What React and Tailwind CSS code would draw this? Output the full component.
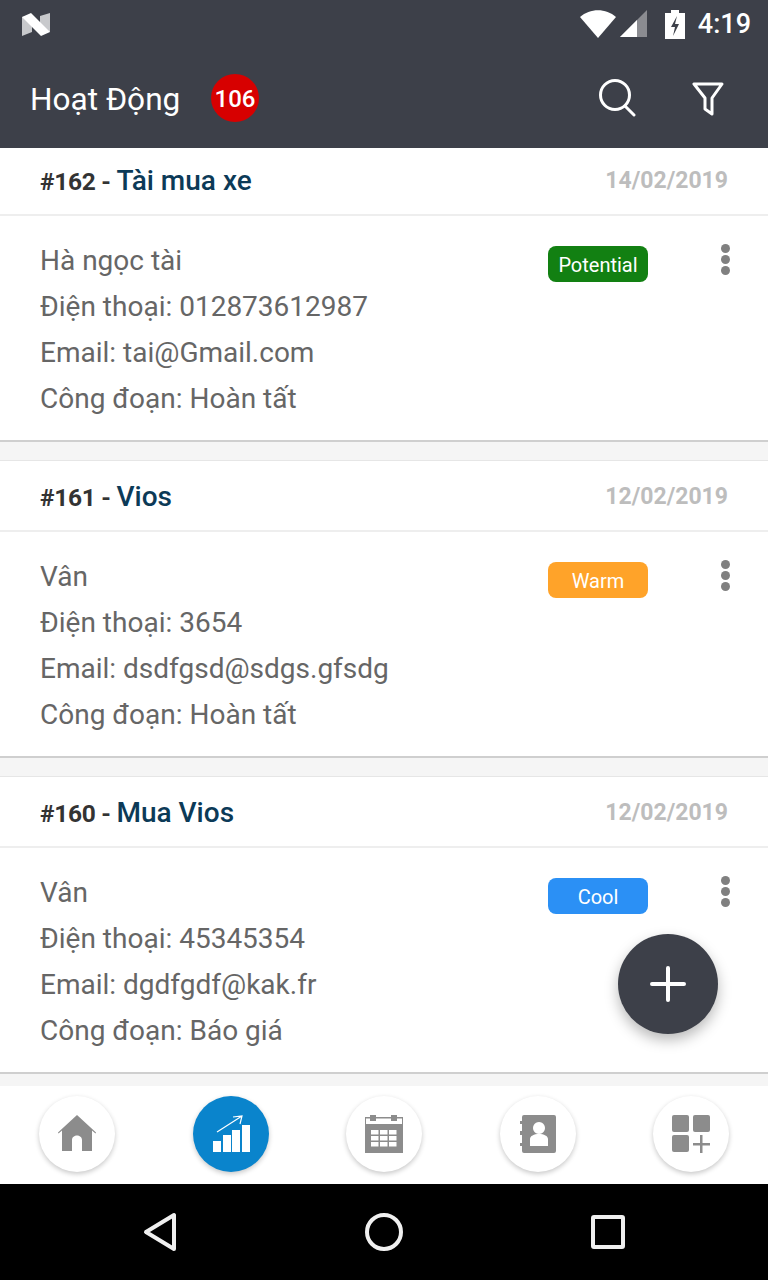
import React from 'react';

const activities = [
    { id: 162, title: 'Tài mua xe', date: '14/02/2019', name: 'Hà ngọc tài', phone: '012873612987', email: 'tai@Gmail.com', stage: 'Hoàn tất', tag: 'Potential', tagClass: 'bg-[#128012]' },
    { id: 161, title: 'Vios', date: '12/02/2019', name: 'Vân', phone: '3654', email: 'dsdfgsd@sdgs.gfsdg', stage: 'Hoàn tất', tag: 'Warm', tagClass: 'bg-[#ffa329]' },
    { id: 160, title: 'Mua Vios', date: '12/02/2019', name: 'Vân', phone: '45345354', email: 'dgdfgdf@kak.fr', stage: 'Báo giá', tag: 'Cool', tagClass: 'bg-[#2b90f5]' },
];

const StatusBar = () => (
    <div className="flex h-12 items-center pl-[21px] pr-[17px] text-white">
        <svg width="30" height="26" viewBox="0 0 30 26">
            <path d="M1 6l10-1v16L1 25z" fill="#c8c9cc" />
            <path d="M19 5l10-3v19l-10-3z" fill="#c8c9cc" />
            <path d="M1 6l9-4 19 19-9 4z" fill="#fff" />
        </svg>
        <svg className="ml-auto" width="36" height="28" viewBox="0 0 36 28">
            <path d="M0 7C10-2 26-2 36 7L18 28z" fill="#fff" />
        </svg>
        <svg className="ml-[3px]" width="30" height="30" viewBox="0 0 30 30">
            <path d="M1 28L28 1v27z" fill="#8b8c91" />
            <path d="M1 28l17-17v17z" fill="#fff" />
        </svg>
        <svg className="ml-[16px]" width="20" height="30" viewBox="0 0 20 30">
            <path d="M6 1h8v3h6v26H0V4h6z" fill="#fff" />
            <path d="M12 7l-6 11h4l-2 9 6-12h-4z" fill="#3d4049" />
        </svg>
        <span className="ml-[13px] text-[27px] font-medium leading-none">4:19</span>
    </div>
);

const AppBar = () => (
    <div className="flex h-[100px] items-center pl-[30px] pr-[44px] text-white">
        <span className="w-[181px] pt-[3px] text-[31.6px] leading-none">Hoạt Động</span>
        <span className="flex size-12 items-center justify-center rounded-full bg-[#d70000] pt-px text-[24px] font-medium">106</span>
        <svg className="ml-auto" width="37" height="38" viewBox="0 0 37 38" fill="none" stroke="#fff" strokeWidth="3" strokeLinecap="round">
            <circle cx="16" cy="16" r="14.500" />
            <path d="M26 27l9 9" />
        </svg>
        <svg className="ml-[56px]" width="32" height="36" viewBox="0 0 32 36" fill="none" stroke="#fff" strokeWidth="3" strokeLinejoin="round">
            <path d="M2 4h28L20 18v16l-7-5V18z" />
        </svg>
    </div>
);

const ActivityCard = ({ item, first }) => (
    <div className={`bg-white border-t border-[#e6e6e6] ${first ? '-mt-1' : ''}`}>
        <div className="flex h-[71px] items-center justify-between border-b-2 border-[#eeeeee] pl-10 pr-10 pt-[2px]">
            <div className="flex items-baseline whitespace-pre leading-none text-[#333333]">
                <span className="text-[24.5px] font-bold tracking-[-0.3px]">#{item.id} - </span>
                <span className="text-[28px] font-medium text-[#0c3a57]">{item.title}</span>
            </div>
            <span className="text-[23px] font-bold leading-none text-[#bdbdbd]">{item.date}</span>
        </div>
        <div className="flex h-[226px] items-start border-b-2 border-[#cfcfcf] pl-10 pt-[22px]">
            <div className="flex-1 text-[28px] leading-[46px] text-[#666666]">
                <div>{item.name}</div>
                <div>Điện thoại: {item.phone}</div>
                <div>Email: {item.email}</div>
                <div>Công đoạn: {item.stage}</div>
            </div>
            <span className={`mt-[8px] flex h-9 w-[100px] items-center justify-center rounded-lg pt-px text-[20px] text-white ${item.tagClass}`}>{item.tag}</span>
            <div className="ml-[73px] mr-[38px] mt-[6px] flex flex-col gap-[2px]">
                <span className="size-[9px] rounded-full bg-[#808080]" />
                <span className="size-[9px] rounded-full bg-[#808080]" />
                <span className="size-[9px] rounded-full bg-[#808080]" />
            </div>
        </div>
    </div>
);

const navIcons = [
    <svg key="home" width="38" height="38" viewBox="0 0 38 38" fill="#8c8c8c">
        <path d="M19 0L38 17.500l-.5 1L34 15.500V36H24V25c0-6-10-6-10 0v11H4V15.500L.5 18.500 0 17.500z" />
    </svg>,
    <svg key="chart" width="38" height="38" viewBox="0 0 38 38">
        <path d="M1 26h8v11H1zM11 20h8v17h-8zM20 15h8v22h-8zM30 10h8v27h-8z" fill="#fff" />
        <path d="M5 17L30 1M21 2l9-1-2 8" fill="none" stroke="#fff" strokeWidth="1.200" />
    </svg>,
    <svg key="calendar" width="38" height="38" viewBox="0 0 38 38" fill="#8c8c8c">
        <path d="M5 0h6v2h15V0h6v2h6v7h-1V3.500h-5V6h-6V3.500H11V6H5V3.500H1V9H0V2h5z" />
        <path fillRule="evenodd" d="M0 9h38v29H0zM6 15v4.500h7.500V15zM15 15v4.500h7.500V15zM24 15v4.500h7.500V15zM6 21v4.500h7.500V21zM15 21v4.500h7.500V21zM24 21v4.500h7.500V21zM6 27v4.500h7.500V27zM15 27v4.500h7.500V27zM24 27v4.500h7.500V27z" />
    </svg>,
    <svg key="contacts" width="36" height="38" viewBox="0 0 36 38" fill="#8c8c8c">
        <path fillRule="evenodd" d="M4 0h30a2 2 0 0 1 2 2v34a2 2 0 0 1-2 2H4a2 2 0 0 1-2-2v-5H0v-3h2V20H0v-4h2V9H0V6h2V2a2 2 0 0 1 2-2zM19 7a6 6 0 1 0 .01 0zM10 31h18v-7c0-3-4-5-9-5s-9 2-9 5z" />
    </svg>,
    <svg key="apps" width="38" height="38" viewBox="0 0 38 38" fill="#8c8c8c">
        <rect x="0" y="0" width="17" height="17" rx="2" />
        <rect x="21" y="0" width="17" height="17" rx="2" />
        <rect x="0" y="20" width="17" height="17" rx="2" />
        <path d="M28 20h2.500v8H38v2.500h-7.500V38H28v-7.500h-7V28h7z" />
    </svg>,
];

const BottomNav = () => (
    <div className="grid h-[98px] grid-cols-5 items-start bg-white pt-[10px]">
        {navIcons.map((icon, i) => (
            <div key={i} className="flex justify-center">
                <div className={`flex size-[76px] items-center justify-center rounded-full shadow-[0_2px_5px_rgba(0,0,0,0.22)] ${i === 1 ? 'ml-px bg-[#0a84cc]' : 'bg-white'}`}>
                    {icon}
                </div>
            </div>
        ))}
    </div>
);

const SoftKeys = () => (
    <div className="grid h-24 grid-cols-3 items-center bg-black px-[48px]">
        <div className="flex justify-center">
            <svg width="36" height="40" viewBox="0 0 36 40" fill="none" stroke="#f0f0f0" strokeWidth="4" strokeLinejoin="round">
                <path d="M32 3v34L4 20z" />
            </svg>
        </div>
        <div className="flex justify-center">
            <svg width="38" height="38" viewBox="0 0 38 38" fill="none" stroke="#f0f0f0" strokeWidth="4">
                <circle cx="19" cy="19" r="17" />
            </svg>
        </div>
        <div className="flex justify-center">
            <svg width="34" height="34" viewBox="0 0 34 34" fill="none" stroke="#f0f0f0" strokeWidth="4" strokeLinejoin="round">
                <rect x="2" y="2" width="30" height="30" rx="1" />
            </svg>
        </div>
    </div>
);

export default function App() {
    return (
        <div className="relative flex h-[1280px] w-[768px] flex-col overflow-hidden bg-[#f5f5f5] font-['Roboto',sans-serif]">
            <header className="bg-[#3d4049]">
                <StatusBar />
                <AppBar />
            </header>
            <main className="flex flex-1 flex-col gap-[18px] overflow-hidden">
                {activities.map((item, i) => (
                    <ActivityCard key={item.id} item={item} first={i === 0} />
                ))}
            </main>
            <BottomNav />
            <SoftKeys />
            <button className="absolute left-[618px] top-[934px] flex size-[100px] items-center justify-center rounded-full bg-[#3d4049] shadow-[0_6px_14px_rgba(0,0,0,0.28)]">
                <svg width="36" height="36" viewBox="0 0 36 36" stroke="#fff" strokeWidth="4" strokeLinecap="round">
                    <path d="M18 2v32M2 18h32" />
                </svg>
            </button>
        </div>
    );
}
